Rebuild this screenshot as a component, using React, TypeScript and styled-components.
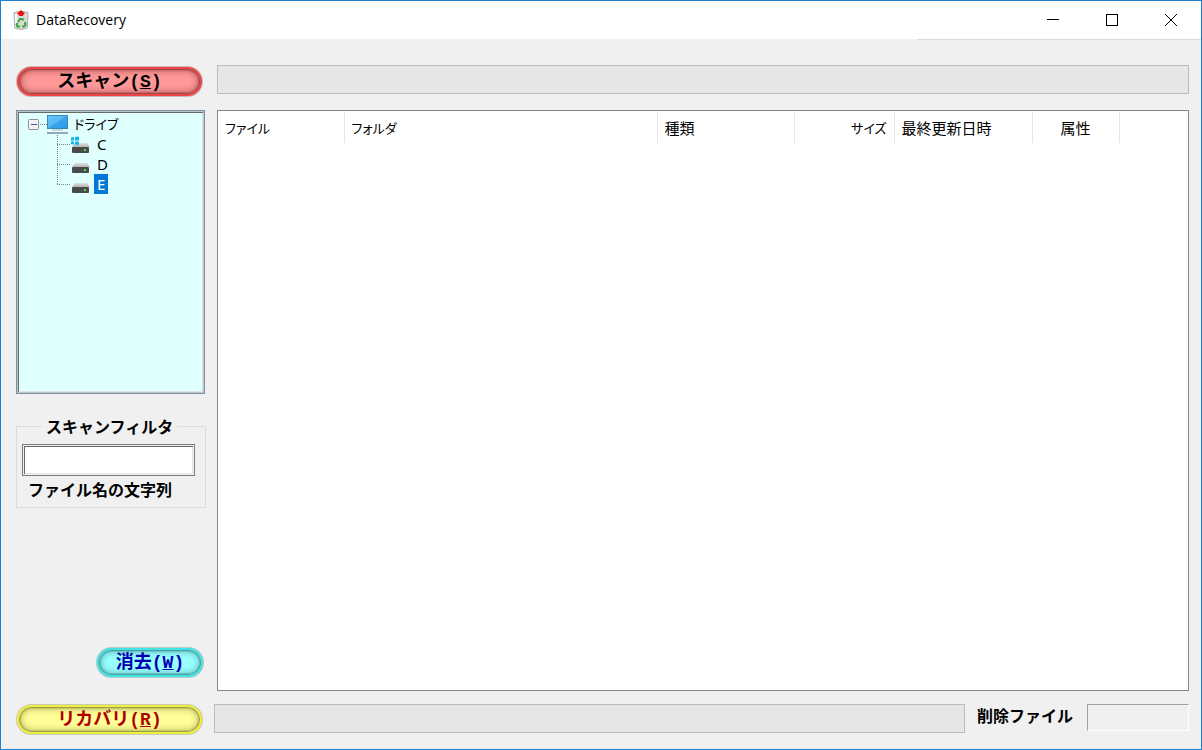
import React from "react";
import styled, { createGlobalStyle, css } from "styled-components";

const Global = createGlobalStyle`
  *, *::before, *::after { box-sizing: border-box; }
  body { margin: 0; background: #f0f0f0; }
  button, input { font: inherit; }
`;

const uiFont = `"Noto Sans", "Noto Sans CJK JP", sans-serif`;
const boldFont = `"Noto Sans CJK JP", sans-serif`;
const buttonFont = `"Liberation Mono", "Noto Sans CJK JP", monospace`;

const Window = styled.div`
  display: flex;
  flex-direction: column;
  min-height: 100vh;
  border: 1px solid #1a80d2;
  background: #f0f0f0;
  color: #000;
  font-family: ${uiFont};
  font-size: 15px;
`;

const TitleBar = styled.header`
  display: flex;
  align-items: center;
  height: 38px;
  padding: 0 1px 0 12px;
  background: #fff;
`;

const Title = styled.h1`
  flex: 1;
  margin: 0 0 0 7px;
  font-family: "Open Sans", sans-serif;
  font-size: 14px;
  line-height: 20px;
  font-weight: 400;
`;

const CaptionButton = styled.button`
  display: flex;
  align-items: center;
  justify-content: center;
  width: 59px;
  height: 38px;
  padding: 0;
  border: 0;
  background: transparent;
`;

const CaptionEdge = styled.div`
  align-self: flex-end;
  width: 283px;
  height: 1px;
  background: #d9d9d9;
`;

const Main = styled.main`
  flex: 1;
  display: grid;
  grid-template-columns: 190px minmax(0, 1fr);
  grid-template-rows: 32px 1fr 31px;
  gap: 13px 11px;
  padding: 25px 12px 14px 15px;
`;

type Tone = "red" | "cyan" | "yellow";

const tones = {
  red: css`
    color: #000;
    background: #ff9999;
    border-color: #f04444;
    box-shadow: 0 0 0 1px #c9b8b8, inset 0 0 2px 1px #8c3c3c, inset 0 0 7px 2px #c06060;
  `,
  cyan: css`
    color: #0000b0;
    background: #99ffff;
    border-color: #3fe4e4;
    box-shadow: 0 0 0 1px #b8c9c9, inset 0 0 2px 1px #3c8c8c, inset 0 0 7px 2px #68c0c0;
  `,
  yellow: css`
    color: #b00000;
    background: #ffff99;
    border-color: #eeee3c;
    box-shadow: 0 0 0 1px #c9c9b8, inset 0 0 2px 1px #8c8c3c, inset 0 0 7px 2px #c0c068;
  `,
};

const PillButton = styled.button<{ $tone: Tone; $narrow?: boolean }>`
  align-self: end;
  width: ${(p) => (p.$narrow ? 106 : 185)}px;
  height: 29px;
  margin: 1px;
  padding: 0;
  border: 2px solid;
  border-radius: 15px;
  font-family: ${buttonFont};
  font-size: 18px;
  font-weight: 700;
  line-height: 22px;
  white-space: nowrap;
  ${(p) => tones[p.$tone]}
`;

const Progress = styled.div`
  height: 29px;
  border: 1px solid #bcbcbc;
  background: #e6e6e6;
`;

const Sidebar = styled.div`
  display: flex;
  flex-direction: column;
`;

const Tree = styled.div`
  width: 189px;
  height: 284px;
  padding: 2px 0 0 11px;
  border: 1px solid #828f98;
  background: #e0ffff;
  box-shadow: inset 0 0 0 1px #b8c8cc, inset 2px 2px 0 #696969, inset -2px -2px 0 #e3e3e3;
`;

const TreeRoot = styled.div`
  display: flex;
  align-items: center;
  height: 22px;
  font-size: 13px;
  font-feature-settings: "palt";
`;

const RootLabel = styled.span`
  margin-left: 6px;
  line-height: 20px;
`;

const Branch = styled.ul`
  margin: 0;
  padding: 0 0 0 29px;
  list-style: none;
`;

const Leaf = styled.li`
  display: flex;
  align-items: center;
  height: 20px;
`;

const LeafLabel = styled.span<{ $selected?: boolean }>`
  margin: 0 0 2px 4px;
  padding: 0 3px;
  line-height: 20px;
  background: ${(p) => (p.$selected ? "#0078d7" : "transparent")};
  color: ${(p) => (p.$selected ? "#fff" : "#000")};
`;

const Filter = styled.fieldset`
  margin: 22px 0 0;
  padding: 8px 5px 5px;
  border: 1px solid #dcdcdc;
  font-family: ${boldFont};
  font-size: 16px;
  font-weight: 700;
`;

const Legend = styled.legend`
  margin-left: 20px;
  padding: 0 4px;
  line-height: 20px;
`;

const FilterInput = styled.input`
  display: block;
  width: 173px;
  height: 32px;
  padding: 0 6px;
  border: 1px solid #7a7a7a;
  background: #fff;
  outline: 0;
  box-shadow: inset 0 0 0 1px #f0f0f0, inset 1px 1px 0 1px #696969, inset -1px -1px 0 1px #e3e3e3;
`;

const FilterLabel = styled.label`
  display: block;
  padding-left: 6px;
  line-height: 26px;
`;

const ClearSlot = styled.div`
  display: flex;
  justify-content: flex-end;
  margin-top: auto;
  padding: 0 2px 13px 0;
`;

const ListView = styled.section`
  border: 1px solid #828790;
  background: #fff;
  overflow: hidden;
`;

const FileTable = styled.table`
  width: 100%;
  table-layout: fixed;
  border-collapse: collapse;
  margin-top: 1px;
  font-feature-settings: "palt";
`;

const Column = styled.th<{ $width?: number; $align?: "left" | "right" | "center"; $kana?: boolean }>`
  width: ${(p) => (p.$width ? `${p.$width}px` : "auto")};
  height: 31px;
  padding: 0 7px;
  border-right: ${(p) => (p.$width ? "1px solid #e5e5e5" : "0")};
  text-align: ${(p) => p.$align ?? "left"};
  font-size: ${(p) => (p.$kana ? 13 : 15)}px;
  font-weight: 400;
  line-height: 20px;
  white-space: nowrap;
`;

const Footer = styled.div`
  display: flex;
  margin-left: -3px;
`;

const FooterProgress = styled(Progress)`
  flex: 1;
`;

const CountLabel = styled.label`
  margin: 0 14px 0 12px;
  font-family: ${boldFont};
  font-size: 16px;
  font-weight: 700;
  line-height: 22px;
`;

const CountBox = styled.output`
  width: 102px;
  height: 27px;
  border: 1px solid;
  border-color: #a0a0a0 #fff #fff #a0a0a0;
`;

const AppIcon = () => (
  <svg width="16" height="20" viewBox="0 0 16 20" aria-hidden="true">
    <path d="M1 2.500Q8 0 15 2.500L14.300 18Q8 21 1.700 18Z" fill="#dadada" stroke="#b0b0b0" />
    <path d="M3 4v13" stroke="#f6f6f6" strokeWidth="2" />
    <path d="M8 0l4 3.500-2 1.500v1H6V5L4 3.500z" fill="#f01010" />
    <path d="M5 12l2-3h2.500l1 1.500M12 12l.5 3-1.500 1.500H9M7 16.500H4.500L3.500 15l1-2" fill="none" stroke="#35a735" strokeWidth="2" />
  </svg>
);

const Monitor = () => (
  <svg width="21" height="20" viewBox="0 0 21 20" aria-hidden="true">
    <defs>
      <linearGradient id="screen" x1="0" y1="0" x2="1" y2="1">
        <stop offset="0" stopColor="#6cc6fa" />
        <stop offset="0.5" stopColor="#55b7f5" />
        <stop offset="0.5" stopColor="#38a5ee" />
        <stop offset="1" stopColor="#2799e8" />
      </linearGradient>
    </defs>
    <rect x="0.5" y="1.5" width="20" height="13" fill="url(#screen)" stroke="#3a86b4" />
    <path d="M5 16h11" stroke="#9fb8c4" />
    <path d="M0 19h21" stroke="#93a9b6" strokeWidth="2" />
  </svg>
);

const Expander = () => (
  <svg width="19" height="20" viewBox="0 0 19 20" aria-hidden="true">
    <rect x="0.5" y="5.5" width="10" height="10" rx="1" fill="#f2f2f4" stroke="#919191" />
    <path d="M3 10.500h6" stroke="#3c50a8" />
    <path d="M12 10.500H19" stroke="#808080" strokeDasharray="1 1" />
  </svg>
);

const Drive = ({ system, last }: { system?: boolean; last?: boolean }) => (
  <svg width="33" height="20" viewBox="0 0 33 20" aria-hidden="true">
    <defs>
      <linearGradient id="lid" x1="0" y1="0" x2="0" y2="1">
        <stop offset="0" stopColor="#e0e0e0" />
        <stop offset="1" stopColor="#b4b4b4" />
      </linearGradient>
    </defs>
    <path d={last ? "M0.500 0v10" : "M0.500 0v20"} stroke="#808080" strokeDasharray="1 1" />
    <path d="M0 9.500h14" stroke="#808080" strokeDasharray="1 1" />
    <path d="M18 8h12l3 4H15z" fill="url(#lid)" />
    <rect x="15" y="12" width="17" height="6" rx="1" fill="#4a4a4a" />
    <rect x="27" y="14" width="2" height="2" fill="#43e543" />
    {system && (
      <path d="M14 2.500l3-.5v3.500h-3zM18 2l4-.6v4h-4zM14 6.500h3v3l-3-.5zM18 6.500h4v3.500l-4-.5z" fill="#10b5ee" />
    )}
  </svg>
);

interface ColumnSpec {
  name: string;
  width: number;
  align?: "left" | "right" | "center";
  kana?: boolean;
}

const columns: ColumnSpec[] = [
  { name: "ファイル", width: 126, kana: true },
  { name: "フォルダ", width: 313, kana: true },
  { name: "種類", width: 137 },
  { name: "サイズ", width: 100, align: "right", kana: true },
  { name: "最終更新日時", width: 138 },
  { name: "属性", width: 87, align: "center" },
];

export default function App() {
  return (
    <Window>
      <Global />
      <TitleBar>
        <AppIcon />
        <Title>DataRecovery</Title>
        <CaptionButton aria-label="Minimize">
          <svg width="12" height="12"><path d="M0 5.500h12" stroke="#000" /></svg>
        </CaptionButton>
        <CaptionButton aria-label="Maximize">
          <svg width="12" height="12"><rect x="0.500" y="0.500" width="11" height="11" fill="none" stroke="#000" /></svg>
        </CaptionButton>
        <CaptionButton aria-label="Close">
          <svg width="12" height="12"><path d="M0 0l12 12M12 0L0 12" stroke="#000" /></svg>
        </CaptionButton>
      </TitleBar>
      <CaptionEdge />
      <Main>
        <PillButton $tone="red">スキャン(<u>S</u>)</PillButton>
        <Progress role="progressbar" aria-label="スキャン" />

        <Sidebar>
          <Tree>
            <TreeRoot>
              <Expander />
              <Monitor />
              <RootLabel>ドライブ</RootLabel>
            </TreeRoot>
            <Branch>
              <Leaf><Drive system /><LeafLabel>C</LeafLabel></Leaf>
              <Leaf><Drive /><LeafLabel>D</LeafLabel></Leaf>
              <Leaf><Drive last /><LeafLabel $selected>E</LeafLabel></Leaf>
            </Branch>
          </Tree>
          <Filter>
            <Legend>スキャンフィルタ</Legend>
            <FilterInput id="name-filter" type="text" />
            <FilterLabel htmlFor="name-filter">ファイル名の文字列</FilterLabel>
          </Filter>
          <ClearSlot>
            <PillButton $tone="cyan" $narrow>消去(<u>W</u>)</PillButton>
          </ClearSlot>
        </Sidebar>

        <ListView>
          <FileTable>
            <thead>
              <tr>
                {columns.map((c) => (
                  <Column key={c.name} $width={c.width} $align={c.align} $kana={c.kana}>{c.name}</Column>
                ))}
                <Column as="td" />
              </tr>
            </thead>
          </FileTable>
        </ListView>

        <PillButton $tone="yellow">リカバリ(<u>R</u>)</PillButton>
        <Footer>
          <FooterProgress role="progressbar" aria-label="リカバリ" />
          <CountLabel htmlFor="deleted-count">削除ファイル</CountLabel>
          <CountBox id="deleted-count" />
        </Footer>
      </Main>
    </Window>
  );
}
